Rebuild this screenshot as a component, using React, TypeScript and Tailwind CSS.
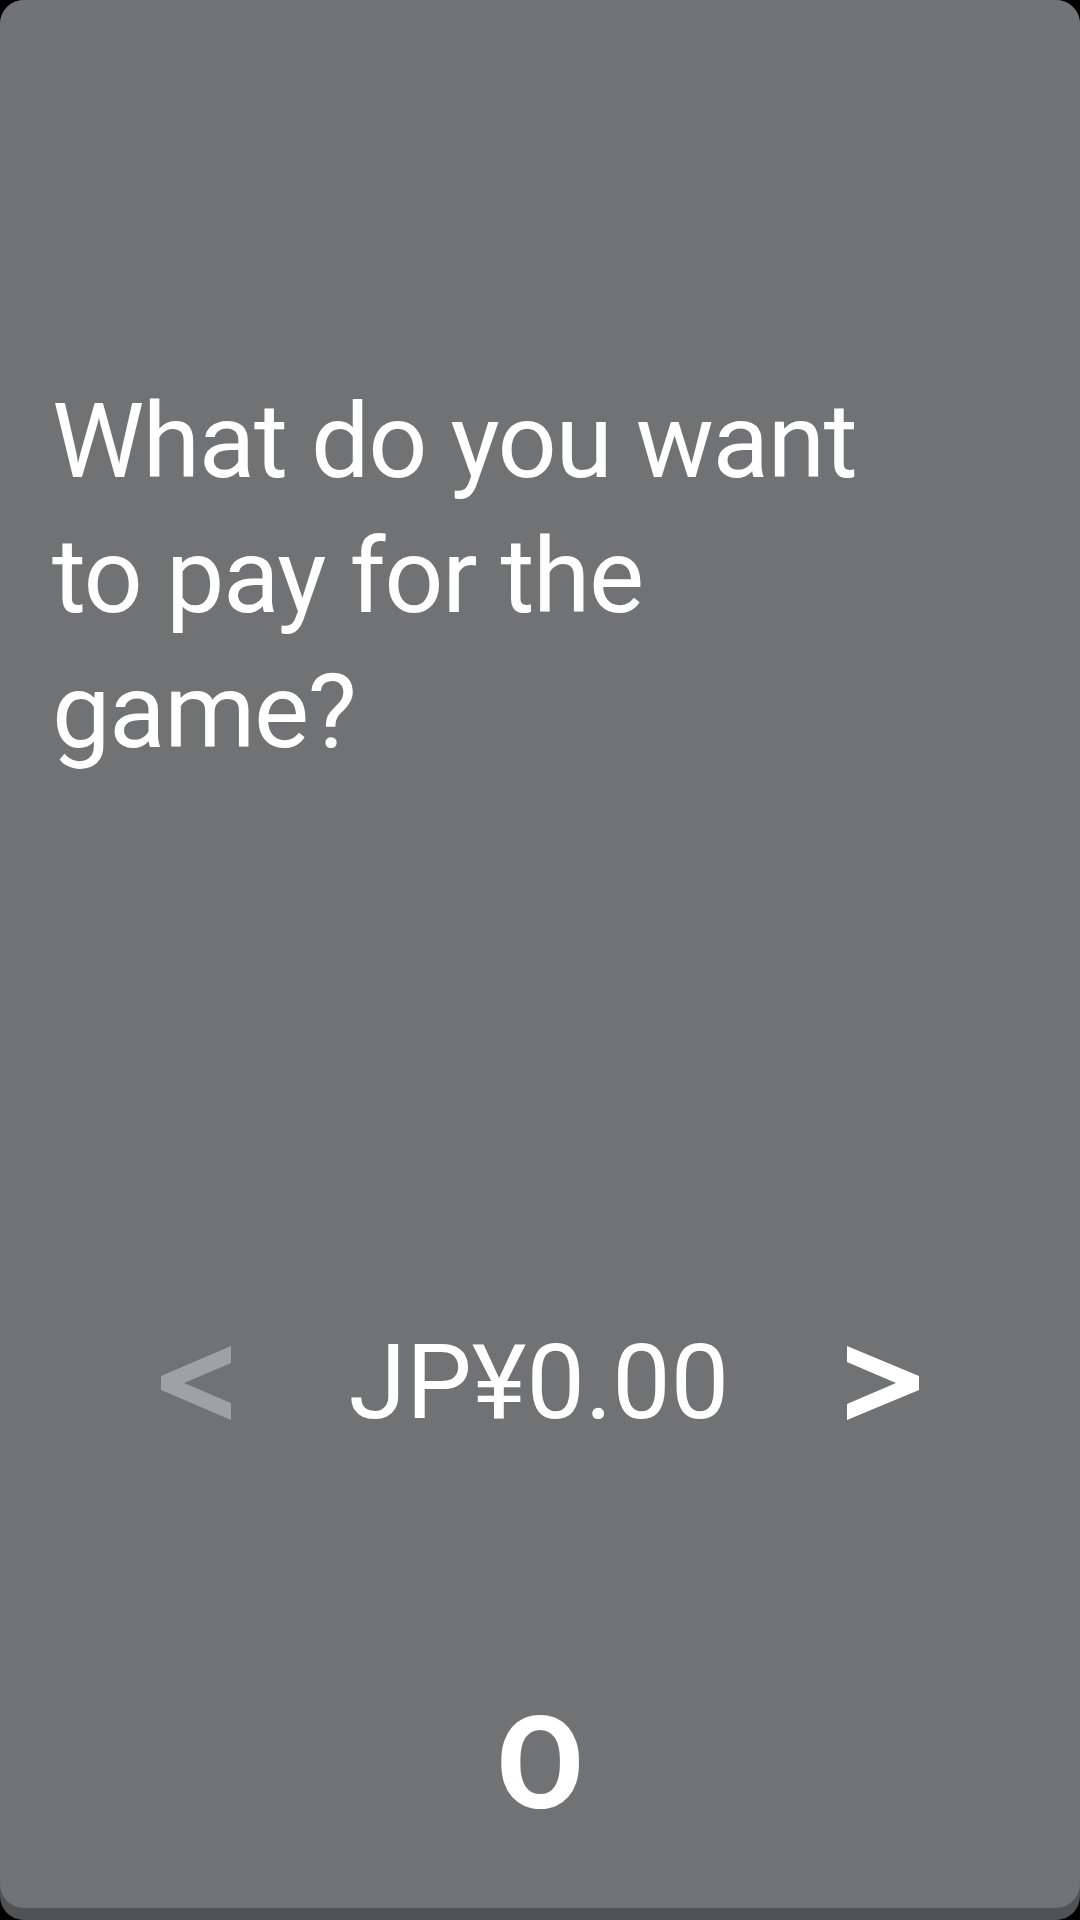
export default function App() {
  return (
    <div className="w-[1080px] h-[1920px] bg-black font-['Roboto',sans-serif] overflow-hidden">
      {/* shadow strip under the card */}
      <div className="h-full rounded-[24px] bg-[#515254]">
        <div className="h-[1908px] rounded-[24px] bg-[#717274] flex flex-col items-center text-white">
          <h1 className="self-start mt-[374px] ml-[52px] w-[840px] text-[104px] leading-[135px] font-normal tracking-[-1.4px]">
            What do you want to pay for the game?
          </h1>

          <div className="mt-[552px] flex items-center gap-[118px]">
            <button className="w-[70px] h-[74px]">
              <svg viewBox="0 0 70 74" className="w-[70px] h-[74px]">
                <polygon
                  points="70,0 0,30 0,44 70,74 70,57 23,37 70,17"
                  fill="#a0a1a3"
                />
              </svg>
            </button>
            <span className="text-[104px] leading-[104px]">JP¥0.00</span>
            <button className="w-[72px] h-[74px]">
              <svg viewBox="0 0 72 74" className="w-[72px] h-[74px]">
                <polygon
                  points="0,0 72,30 72,44 0,74 0,58 49,37 0,16"
                  fill="#ffffff"
                />
              </svg>
            </button>
          </div>

          <div className="mt-[265px] text-[128px] leading-[128px] font-bold">O</div>
        </div>
      </div>
    </div>
  );
}
